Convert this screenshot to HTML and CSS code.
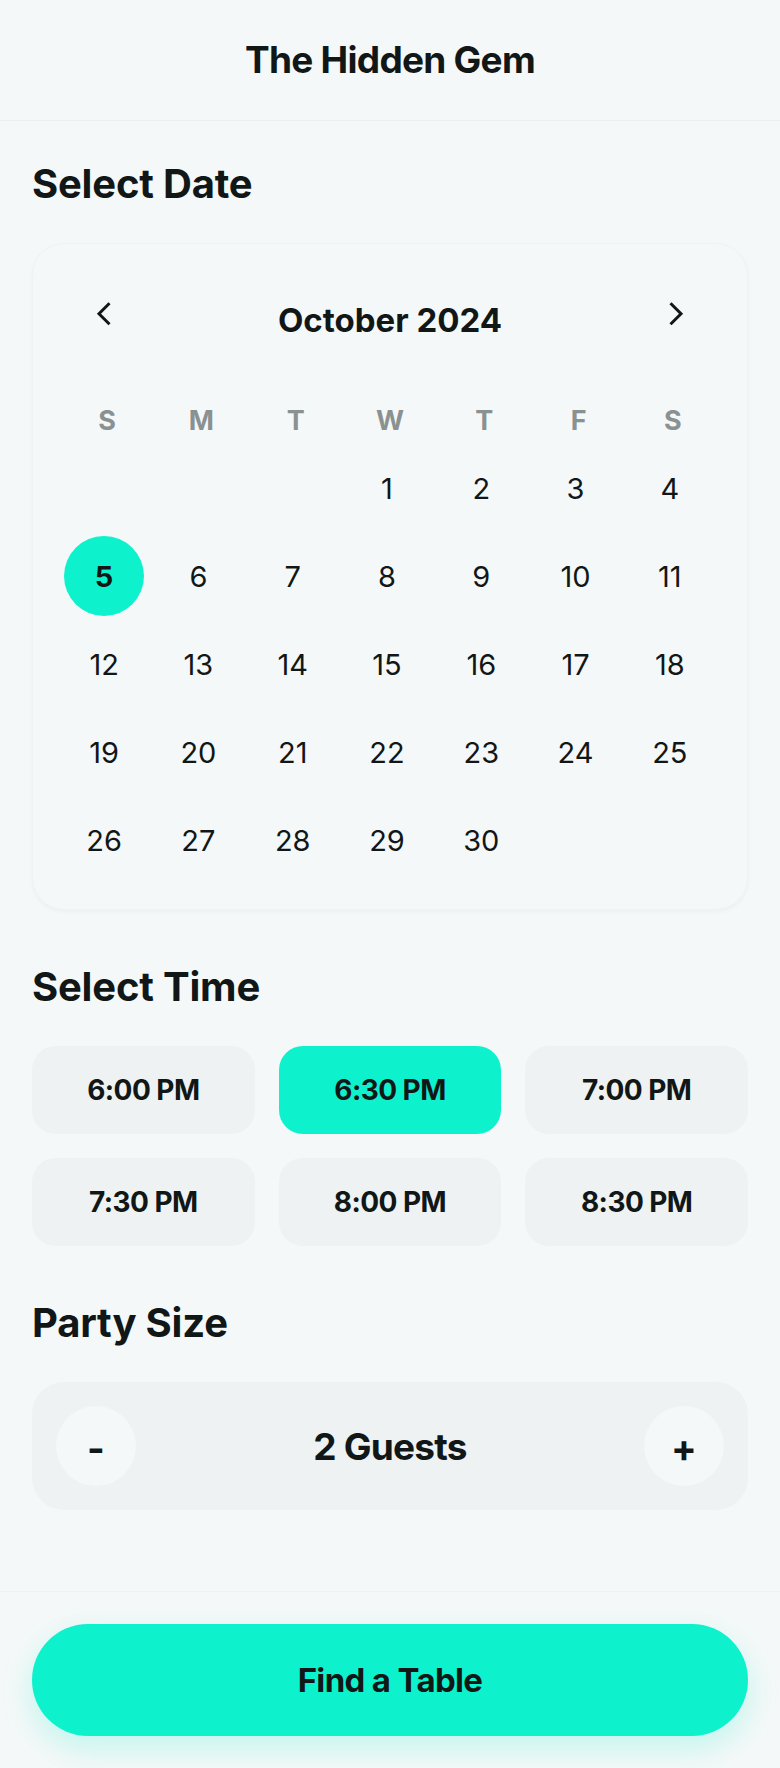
FILE: index.html
```html
<!DOCTYPE html>
<html lang="en">
<head>
<meta charset="utf-8">
<title>The Hidden Gem – Reserve</title>
<link rel="stylesheet" href="styles.css">
</head>
<body>
<header class="topbar">
  <h1 class="title">The Hidden Gem</h1>
</header>
<main class="content">
  <section class="section">
    <h2 class="section-title">Select Date</h2>
    <div class="calendar">
      <div class="cal-nav">
        <button class="nav-btn" aria-label="Previous month">
          <svg width="48" height="48" viewBox="0 0 48 48"><polyline points="29.5,7.2 19,17.7 29.5,28.2" fill="none" stroke="#111717" stroke-width="3"/></svg>
        </button>
        <span class="month">October 2024</span>
        <button class="nav-btn" aria-label="Next month">
          <svg width="48" height="48" viewBox="0 0 48 48"><polyline points="18.5,7.2 29,17.7 18.5,28.2" fill="none" stroke="#111717" stroke-width="3"/></svg>
        </button>
      </div>
      <div class="weekdays">
        <span>S</span><span>M</span><span>T</span><span>W</span><span>T</span><span>F</span><span>S</span>
      </div>
      <div class="days">
        <span class="day"></span><span class="day"></span><span class="day"></span>
        <span class="day">1</span><span class="day">2</span><span class="day">3</span><span class="day">4</span>
        <span class="day"><span class="day-selected">5</span></span><span class="day">6</span><span class="day">7</span><span class="day">8</span><span class="day">9</span><span class="day">10</span><span class="day">11</span>
        <span class="day">12</span><span class="day">13</span><span class="day">14</span><span class="day">15</span><span class="day">16</span><span class="day">17</span><span class="day">18</span>
        <span class="day">19</span><span class="day">20</span><span class="day">21</span><span class="day">22</span><span class="day">23</span><span class="day">24</span><span class="day">25</span>
        <span class="day">26</span><span class="day">27</span><span class="day">28</span><span class="day">29</span><span class="day">30</span><span class="day"></span><span class="day"></span>
      </div>
    </div>
  </section>

  <section class="section section-spaced">
    <h2 class="section-title">Select Time</h2>
    <div class="times">
      <button class="time">6:00 PM</button>
      <button class="time time-active">6:30 PM</button>
      <button class="time">7:00 PM</button>
      <button class="time">7:30 PM</button>
      <button class="time">8:00 PM</button>
      <button class="time">8:30 PM</button>
    </div>
  </section>

  <section class="section section-spaced">
    <h2 class="section-title">Party Size</h2>
    <div class="party">
      <button class="step" aria-label="Fewer guests">-</button>
      <span class="guests">2 Guests</span>
      <button class="step" aria-label="More guests">+</button>
    </div>
  </section>
</main>
<footer class="footer">
  <button class="cta">Find a Table</button>
</footer>
</body>
</html>
```

FILE: styles.css
```css
* { box-sizing: border-box; }

html, body {
  margin: 0;
  padding: 0;
}

body {
  min-height: 100vh;
  display: flex;
  flex-direction: column;
  background: #f4f8f8;
  color: #111717;
  font-family: "Inter", "Noto Sans", sans-serif;
}

button {
  font-family: inherit;
  color: inherit;
  border: none;
  margin: 0;
  padding: 0;
  cursor: pointer;
}

.topbar {
  height: 121px;
  border-bottom: 1px solid #e9eeee;
  display: flex;
  align-items: center;
  justify-content: center;
}

.title {
  margin: 0;
  font-size: 37px;
  line-height: 48px;
  font-weight: 700;
  letter-spacing: -0.02em;
}

.content {
  flex: 1;
  padding: 39px 32px 0;
}

.section-spaced {
  margin-top: 53px;
}

.section-title {
  margin: 0 0 35px;
  font-size: 40px;
  line-height: 48px;
  font-weight: 700;
  letter-spacing: -0.005em;
}

/* Calendar */
.calendar {
  border: 1px solid #eff3f3;
  border-radius: 32px;
  padding: 27px 27px 29px;
  background: #f5f8f9;
  box-shadow: 0 2px 4px rgba(17, 23, 23, 0.035);
}

.cal-nav {
  height: 98px;
  padding: 0 20px;
  display: flex;
  align-items: center;
  justify-content: space-between;
}

.nav-btn {
  width: 48px;
  height: 48px;
  background: transparent;
  display: flex;
}

.month {
  font-size: 33px;
  font-weight: 700;
  letter-spacing: 0;
}

.weekdays {
  margin-top: 31px;
  height: 40px;
  display: grid;
  grid-template-columns: repeat(7, 1fr);
  align-items: center;
  justify-items: center;
  color: #8a9191;
  font-size: 27px;
  font-weight: 700;
}

.days {
  margin: 8px 3px 0 -3px;
  display: grid;
  grid-template-columns: repeat(7, 1fr);
  grid-auto-rows: 80px;
  row-gap: 8px;
}

.day {
  display: flex;
  align-items: center;
  justify-content: center;
  font-size: 29px;
  font-weight: 400;
}

.day-selected {
  width: 80px;
  height: 80px;
  border-radius: 50%;
  background: #0ef1cd;
  font-weight: 700;
  display: flex;
  align-items: center;
  justify-content: center;
}

/* Times */
.times {
  display: grid;
  grid-template-columns: repeat(3, 1fr);
  gap: 24px;
}

.time {
  height: 88px;
  border-radius: 24px;
  background: #eef2f2;
  font-size: 28px;
  font-weight: 700;
  letter-spacing: -0.02em;
}

.time-active {
  background: #0ef1cd;
}

/* Party size */
.party {
  height: 128px;
  padding: 0 24px;
  border-radius: 32px;
  background: #eef2f2;
  display: flex;
  align-items: center;
  justify-content: space-between;
}

.step {
  width: 80px;
  height: 80px;
  border-radius: 50%;
  background: #f4f8f8;
  font-size: 38px;
  font-weight: 700;
  line-height: 1;
  padding-top: 4px;
}

.guests {
  font-size: 37px;
  font-weight: 700;
  letter-spacing: -0.02em;
}

/* Footer */
.footer {
  border-top: 1px solid #eef2f2;
  padding: 32px;
}

.cta {
  width: 100%;
  height: 112px;
  border-radius: 56px;
  background: #0ef1cd;
  font-size: 33px;
  font-weight: 700;
  letter-spacing: -0.02em;
  box-shadow: 0 12px 30px rgba(14, 241, 205, 0.22);
}
```
